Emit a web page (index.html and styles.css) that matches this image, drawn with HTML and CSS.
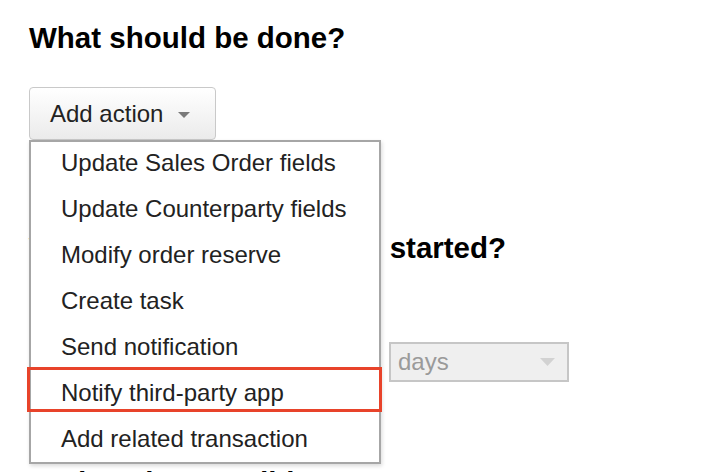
FILE: index.html
```html
<!DOCTYPE html>
<html lang="en">
<head>
<meta charset="utf-8">
<title>Scenario actions</title>
<link rel="stylesheet" href="styles.css">
</head>
<body>
<main class="page">
  <section class="block block-what">
    <h2 class="title">What should be done?</h2>
    <div class="picker">
      <button class="add-btn" type="button">
        <span>Add action</span>
        <svg class="caret" width="12" height="6" viewBox="0 0 12 6"><path d="M0 0H12L6 6Z" fill="#7a7a7a"/></svg>
      </button>
      <ul class="menu">
        <li class="menu-item">Update Sales Order fields</li>
        <li class="menu-item">Update Counterparty fields</li>
        <li class="menu-item">Modify order reserve</li>
        <li class="menu-item">Create task</li>
        <li class="menu-item">Send notification</li>
        <li class="menu-item menu-item--marked">Notify third-party app</li>
        <li class="menu-item">Add related transaction</li>
      </ul>
    </div>
  </section>

  <section class="block block-when">
    <h2 class="title title--when">When should the task be started?</h2>
    <div class="delay-row">
      <div class="num-input">0</div>
      <div class="select">
        <span>days</span>
        <svg class="caret" width="15" height="8" viewBox="0 0 15 8"><path d="M0 0H15L7.5 8Z" fill="#d2d2d2"/></svg>
      </div>
    </div>
  </section>

  <section class="block block-cond">
    <h2 class="title">Under what conditions?</h2>
  </section>
</main>
</body>
</html>
```

FILE: styles.css
```css
html, body {
  margin: 0;
  padding: 0;
  background: #ffffff;
}

body {
  font-family: "Liberation Sans", Arial, Helvetica, sans-serif;
  color: #222222;
  overflow: hidden;
  height: 472px;
}

.page {
  padding: 21px 29px 0 29px;
}

.title {
  margin: 0;
  font-size: 29.5px;
  line-height: 34px;
  font-weight: bold;
  color: #000000;
  white-space: nowrap;
}

.title--when {
  word-spacing: 1px;
}

.block-what .picker {
  position: relative;
  margin-top: 32px;
  width: 187px;
  z-index: 2;
}

.add-btn {
  box-sizing: border-box;
  display: flex;
  align-items: center;
  gap: 15px;
  width: 187px;
  height: 53px;
  padding: 0 0 0 20px;
  border: 1px solid #c9c9c9;
  border-radius: 4px;
  background: linear-gradient(#ffffff, #ebebeb);
  font-family: inherit;
  font-size: 24px;
  color: #222222;
  cursor: pointer;
}

.add-btn .caret {
  margin-top: 3px;
}

.menu {
  position: absolute;
  top: 53px;
  left: 0;
  box-sizing: border-box;
  width: 352px;
  margin: 0;
  padding: 0;
  list-style: none;
  background: #ffffff;
  border: 2px solid #a6a6a6;
  box-shadow: 1px 2px 4px rgba(0, 0, 0, 0.15);
}

.menu-item {
  position: relative;
  height: 46px;
  box-sizing: border-box;
  padding: 0 0 4px 30px;
  line-height: 42px;
  font-size: 24px;
  color: #222222;
  white-space: nowrap;
}

.menu-item:last-child {
  height: 44px;
}

.menu-item--marked::after {
  content: "";
  position: absolute;
  top: -5px;
  left: -4px;
  width: 355px;
  height: 45px;
  box-sizing: border-box;
  border: 3px solid #e8432a;
}

.block-when {
  margin-top: 91px;
}

.delay-row {
  display: flex;
  gap: 8px;
  margin-top: 77px;
  height: 40px;
}

.num-input {
  box-sizing: border-box;
  width: 352px;
  height: 40px;
  border: 2px solid #c8c8c8;
  padding: 0 8px;
  font-size: 24px;
  line-height: 36px;
  color: #222222;
}

.select {
  box-sizing: border-box;
  display: flex;
  align-items: center;
  justify-content: space-between;
  width: 180px;
  height: 40px;
  padding: 0 12px 0 7px;
  border: 2px solid #c6c6c6;
  background: #efefef;
  font-size: 24px;
  color: #9a9a9a;
}

.block-cond {
  margin-top: 84px;
}
```
